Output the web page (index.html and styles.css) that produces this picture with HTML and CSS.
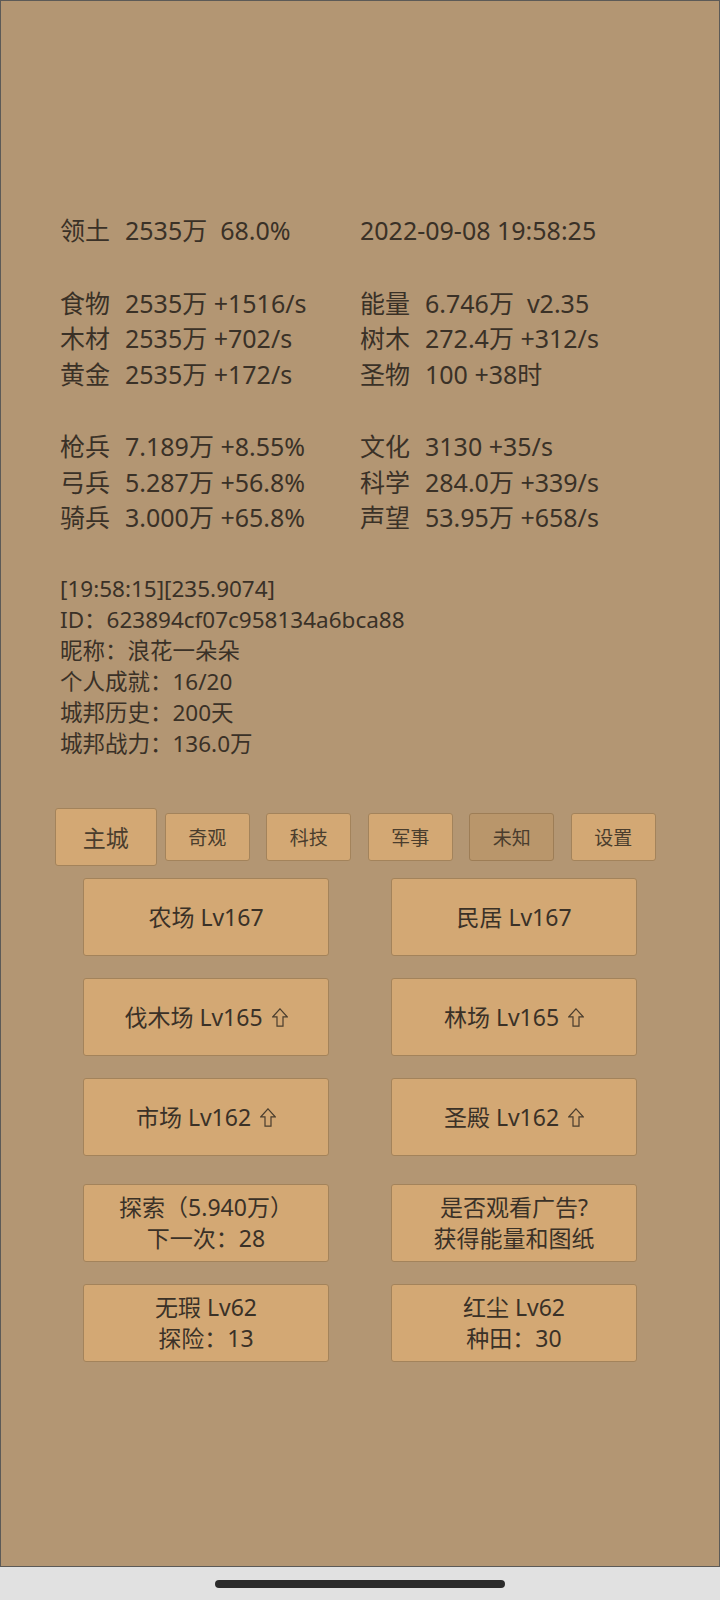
FILE: index.html
```html
<!DOCTYPE html>
<html lang="zh-CN">
<head>
<meta charset="utf-8">
<title>城邦</title>
<link rel="stylesheet" href="styles.css">
</head>
<body>
<div class="screen">
  <div class="stats">
    <div class="group">
      <div class="cell"><span class="lbl">领土</span><span class="val">2535万  68.0%</span></div>
      <div class="cell"><span class="val-plain">2022-09-08 19:58:25</span></div>
    </div>
    <div class="group">
      <div class="cell"><span class="lbl">食物</span><span class="val">2535万 +1516/s</span></div>
      <div class="cell"><span class="lbl">能量</span><span class="val">6.746万  v2.35</span></div>
      <div class="cell"><span class="lbl">木材</span><span class="val">2535万 +702/s</span></div>
      <div class="cell"><span class="lbl">树木</span><span class="val">272.4万 +312/s</span></div>
      <div class="cell"><span class="lbl">黄金</span><span class="val">2535万 +172/s</span></div>
      <div class="cell"><span class="lbl">圣物</span><span class="val">100 +38时</span></div>
    </div>
    <div class="group">
      <div class="cell"><span class="lbl">枪兵</span><span class="val">7.189万 +8.55%</span></div>
      <div class="cell"><span class="lbl">文化</span><span class="val">3130 +35/s</span></div>
      <div class="cell"><span class="lbl">弓兵</span><span class="val">5.287万 +56.8%</span></div>
      <div class="cell"><span class="lbl">科学</span><span class="val">284.0万 +339/s</span></div>
      <div class="cell"><span class="lbl">骑兵</span><span class="val">3.000万 +65.8%</span></div>
      <div class="cell"><span class="lbl">声望</span><span class="val">53.95万 +658/s</span></div>
    </div>
    <div class="info">
      <div>[19:58:15][235.9074]</div>
      <div>ID：623894cf07c958134a6bca88</div>
      <div>昵称：浪花一朵朵</div>
      <div>个人成就：16/20</div>
      <div>城邦历史：200天</div>
      <div>城邦战力：136.0万</div>
    </div>
  </div>

  <div class="tabs">
    <div class="tab-cell"><div class="tab tab-main">主城</div></div>
    <div class="tab-cell"><div class="tab">奇观</div></div>
    <div class="tab-cell"><div class="tab">科技</div></div>
    <div class="tab-cell"><div class="tab">军事</div></div>
    <div class="tab-cell"><div class="tab tab-dark">未知</div></div>
    <div class="tab-cell"><div class="tab">设置</div></div>
  </div>

  <div class="buildings">
    <div class="btn">农场 Lv167</div>
    <div class="btn">民居 Lv167</div>
    <div class="btn">伐木场 Lv165<svg class="up" viewBox="0 0 16 19" width="16" height="19"><path d="M8 0.8 L15.2 8.8 L11 8.8 L11 18.2 L5 18.2 L5 8.8 L0.8 8.8 Z"/></svg></div>
    <div class="btn">林场 Lv165<svg class="up" viewBox="0 0 16 19" width="16" height="19"><path d="M8 0.8 L15.2 8.8 L11 8.8 L11 18.2 L5 18.2 L5 8.8 L0.8 8.8 Z"/></svg></div>
    <div class="btn">市场 Lv162<svg class="up" viewBox="0 0 16 19" width="16" height="19"><path d="M8 0.8 L15.2 8.8 L11 8.8 L11 18.2 L5 18.2 L5 8.8 L0.8 8.8 Z"/></svg></div>
    <div class="btn">圣殿 Lv162<svg class="up" viewBox="0 0 16 19" width="16" height="19"><path d="M8 0.8 L15.2 8.8 L11 8.8 L11 18.2 L5 18.2 L5 8.8 L0.8 8.8 Z"/></svg></div>
  </div>

  <div class="buildings extra">
    <div class="btn two"><span>探索（5.940万）</span><span>下一次：28</span></div>
    <div class="btn two"><span>是否观看广告?</span><span>获得能量和图纸</span></div>
    <div class="btn two"><span>无瑕 Lv62</span><span>探险：13</span></div>
    <div class="btn two"><span>红尘 Lv62</span><span>种田：30</span></div>
  </div>
</div>
<div class="navbar"><div class="home"></div></div>
</body>
</html>
```

FILE: styles.css
```css
html, body {
  margin: 0;
  padding: 0;
}
body {
  width: 720px;
  height: 1600px;
  background: #e1e1e1;
  font-family: "Noto Sans", "Noto Sans CJK SC", sans-serif;
  color: #3a3127;
  overflow: hidden;
  text-spacing-trim: space-all;
}
.screen {
  box-sizing: border-box;
  width: 720px;
  height: 1567px;
  border: 1px solid #5c5a57;
  background: #b39673;
  padding-top: 212px;
}
.stats {
  padding-left: 59px;
}
.group {
  display: grid;
  grid-template-columns: 300px auto;
  font-size: 25px;
  line-height: 35.5px;
  margin-top: 37px;
}
.group:first-child {
  margin-top: 0;
}
.cell {
  white-space: pre;
}
.lbl {
  margin-right: 15px;
}
.info {
  margin-top: 37px;
  font-size: 22.5px;
  line-height: 31px;
}
.tabs {
  display: grid;
  grid-template-columns: repeat(6, 101.5px);
  margin-left: 54px;
  margin-top: 49.5px;
  height: 58px;
}
.tab-cell {
  display: flex;
  align-items: center;
  justify-content: center;
}
.tab {
  box-sizing: border-box;
  width: 85px;
  height: 48px;
  display: flex;
  align-items: center;
  justify-content: center;
  background: #d3a874;
  border: 1.5px solid #a3835b;
  border-radius: 3px;
  font-size: 19px;
  color: #4a3d2d;
}
.tab-main {
  width: 102px;
  height: 58px;
  font-size: 23px;
}
.tab-dark {
  background: #b9966b;
  border-color: #9d7d56;
}
.buildings {
  display: grid;
  grid-template-columns: 246px 246px;
  grid-auto-rows: 78px;
  column-gap: 62px;
  row-gap: 22px;
  padding-left: 82px;
  margin-top: 12px;
}
.buildings.extra {
  margin-top: 28px;
}
.btn {
  box-sizing: border-box;
  display: flex;
  align-items: center;
  justify-content: center;
  background: #d3a874;
  border: 1.5px solid #a3835b;
  border-radius: 3px;
  font-size: 23px;
  line-height: 31px;
  color: #3a3127;
}
.btn.two {
  flex-direction: column;
}
.up {
  margin-left: 9px;
  fill: none;
  stroke: #4a3d2d;
  stroke-width: 1.2;
  stroke-linejoin: miter;
}
.navbar {
  height: 33px;
  display: flex;
  justify-content: center;
  align-items: center;
}
.home {
  width: 290px;
  height: 8px;
  border-radius: 4px;
  background: #2b2b2b;
  margin-top: 1px;
}
```
